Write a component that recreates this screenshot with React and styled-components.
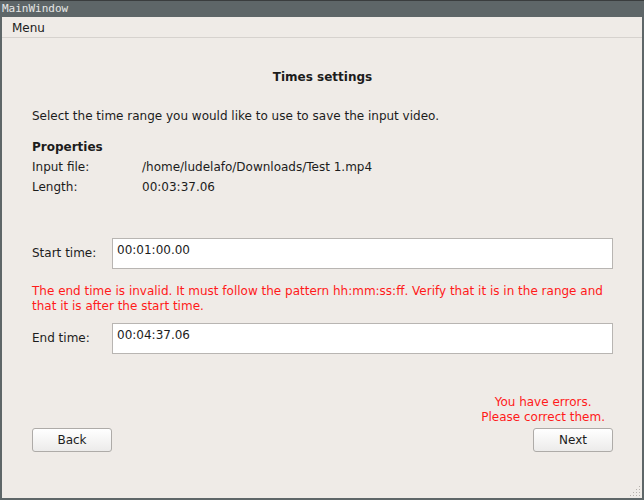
import React from 'react'
import styled, { createGlobalStyle } from 'styled-components'

const GlobalStyle = createGlobalStyle`
  html, body {
    margin: 0;
    padding: 0;
    background: #5e6668;
  }
  body {
    font-family: "DejaVu Sans", "Liberation Sans", sans-serif;
    font-size: 12px;
    color: #1c1c1c;
  }
`

const Window = styled.div`
  width: 644px;
  height: 500px;
  display: flex;
  flex-direction: column;
  box-sizing: border-box;
  background: #5e6668;
  border-top: 1px solid #3a3d3e;
`

const TitleBar = styled.div`
  height: 16px;
  line-height: 15px;
  padding-left: 2px;
  font-family: "DejaVu Sans Mono", "Liberation Mono", monospace;
  font-size: 11px;
  color: #e6e6e6;
`

const Body = styled.div`
  flex: 1;
  margin: 0 2px 2px 2px;
  background: #efebe7;
  display: flex;
  flex-direction: column;
  position: relative;
`

const MenuBar = styled.div`
  height: 21px;
  box-sizing: border-box;
  padding-top: 2px;
  border-bottom: 1px solid #d6d2ce;
  display: flex;
  align-items: center;
  padding-left: 10px;
`

const MenuItem = styled.span`
  font-size: 12px;
  color: #1c1c1c;
`

const Page = styled.div`
  flex: 1;
  display: flex;
  flex-direction: column;
  padding: 0 29px 0 30px;
  line-height: 15px;
`

const Heading = styled.div`
  margin-top: 32px;
  text-align: center;
  font-weight: bold;
`

const Intro = styled.div`
  margin-top: 24px;
`

const SectionTitle = styled.div`
  margin-top: 16px;
  font-weight: bold;
`

const PropGrid = styled.div`
  display: grid;
  grid-template-columns: 110px 1fr;
  grid-auto-rows: 20px;
  align-items: center;
  margin-top: 2px;
`

const FieldRow = styled.div`
  display: flex;
  align-items: center;
  margin-top: ${({ $top }) => $top}px;
`

const FieldLabel = styled.div`
  width: 80px;
  flex: none;
`

const Input = styled.div`
  flex: 1;
  height: 31px;
  box-sizing: border-box;
  background: #ffffff;
  border: 1px solid #b8b5b2;
  padding: 4px 4px;
  line-height: 15px;
`

const ErrorText = styled.div`
  color: #ff1a1a;
  margin-top: ${({ $top }) => $top}px;
  text-align: ${({ $align }) => $align || 'left'};
`

const ErrorBox = styled.div`
  margin-top: 41px;
  display: flex;
  justify-content: flex-end;
  padding-right: 8px;
`

const ButtonRow = styled.div`
  margin-top: 3px;
  display: flex;
  justify-content: space-between;
`

const Button = styled.button`
  width: 80px;
  height: 24px;
  font-family: "DejaVu Sans", "Liberation Sans", sans-serif;
  font-size: 12px;
  color: #1c1c1c;
  border: 1px solid #aeaba8;
  border-radius: 3px;
  background: linear-gradient(#ffffff, #ecebea);
  padding: 0;
`

const Grip = styled.svg`
  position: absolute;
  right: 1px;
  bottom: 1px;
`

export default function App() {
  const dots = [
    [10, 1],
    [7, 4], [10, 4],
    [4, 7], [7, 7], [10, 7],
    [1, 10], [4, 10], [7, 10], [10, 10],
  ]
  return (
    <>
      <GlobalStyle />
      <Window>
        <TitleBar>MainWindow</TitleBar>
        <Body>
          <MenuBar>
            <MenuItem>Menu</MenuItem>
          </MenuBar>
          <Page>
            <Heading>Times settings</Heading>
            <Intro>Select the time range you would like to use to save the input video.</Intro>
            <SectionTitle>Properties</SectionTitle>
            <PropGrid>
              <span>Input file:</span>
              <span>/home/ludelafo/Downloads/Test 1.mp4</span>
              <span>Length:</span>
              <span>00:03:37.06</span>
            </PropGrid>
            <FieldRow $top={41}>
              <FieldLabel>Start time:</FieldLabel>
              <Input>00:01:00.00</Input>
            </FieldRow>
            <ErrorText $top={15}>
              The end time is invalid. It must follow the pattern hh:mm:ss:ff. Verify that it is in the range and that it is after the start time.
            </ErrorText>
            <FieldRow $top={9}>
              <FieldLabel>End time:</FieldLabel>
              <Input>00:04:37.06</Input>
            </FieldRow>
            <ErrorBox>
              <ErrorText $top={0} $align="center">
                You have errors.
                <br />
                Please correct them.
              </ErrorText>
            </ErrorBox>
            <ButtonRow>
              <Button>Back</Button>
              <Button>Next</Button>
            </ButtonRow>
          </Page>
          <Grip width="12" height="12" viewBox="0 0 12 12">
            {dots.map(([x, y]) => (
              <rect key={`${x}-${y}`} x={x} y={y} width="1" height="1" fill="#b5b1ad" />
            ))}
          </Grip>
        </Body>
      </Window>
    </>
  )
}
